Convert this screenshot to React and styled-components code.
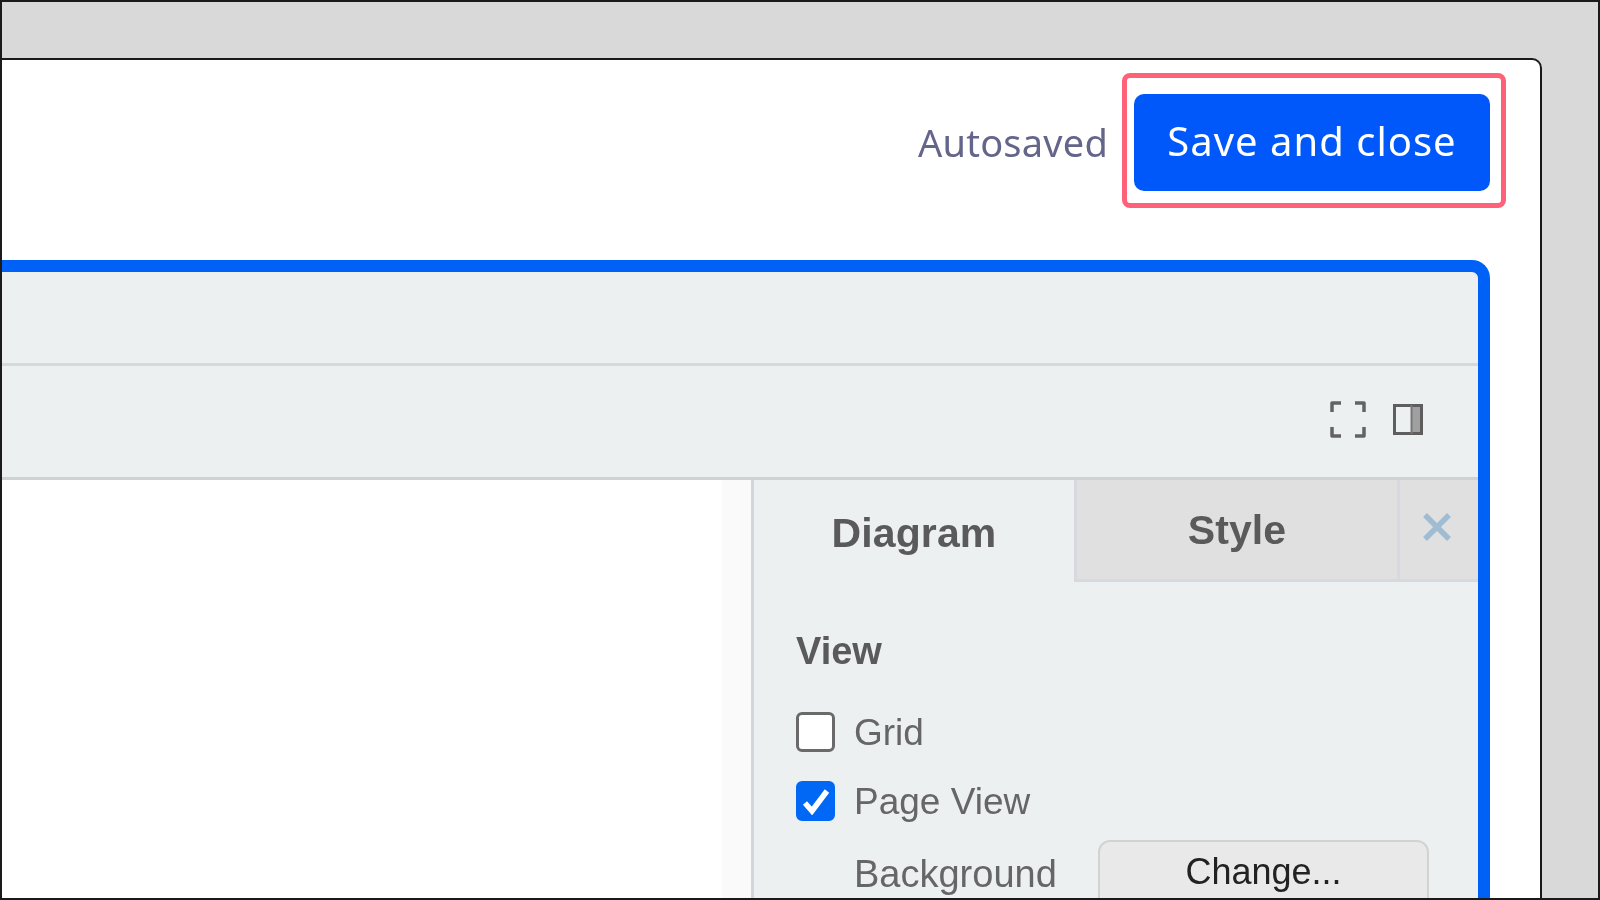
import React from 'react';
import styled, { createGlobalStyle } from 'styled-components';

const GlobalStyle = createGlobalStyle`
  html, body {
    margin: 0;
    height: 100%;
    background: #d9d9d9;
  }
  * {
    box-sizing: border-box;
  }
`;

const Page = styled.div`
  width: 1600px;
  height: 900px;
  overflow: hidden;
  display: flex;
  flex-direction: column;
  background: #d9d9d9;
  border: 2px solid #1a1a1a;
  padding: 56px 56px 0 0;
`;

const ModalWindow = styled.div`
  flex: 1;
  min-height: 0;
  display: flex;
  flex-direction: column;
  background: #fff;
  border-top: 2px solid #1a1a1a;
  border-right: 2px solid #1a1a1a;
  border-top-right-radius: 10px;
  padding-top: 13px;
`;

const Soft = styled.div`
  flex: 1;
  min-height: 0;
  display: flex;
  flex-direction: column;
  filter: blur(0.7px);
`;

const Header = styled.header`
  display: flex;
  justify-content: flex-end;
  align-items: center;
  gap: 14px;
  padding-right: 34px;
  height: 135px;
`;

const Autosaved = styled.span`
  font-family: "Noto Sans", sans-serif;
  font-size: 38px;
  letter-spacing: 0.2px;
  color: #64658a;
  margin-top: 3px;
`;

const Highlight = styled.div`
  width: 384px;
  height: 135px;
  border: 5px solid #ff6178;
  border-radius: 8px;
  padding: 16px 11px 0 7px;
`;

const SaveButton = styled.button`
  width: 100%;
  height: 97px;
  border: 0;
  border-radius: 10px;
  background: #0058fa;
  color: #fff;
  font-family: "Noto Sans", sans-serif;
  font-size: 40px;
  letter-spacing: 1px;
  padding: 0 0 5px;
`;

const Editor = styled.div`
  flex: 1;
  min-height: 0;
  display: flex;
  flex-direction: column;
  margin: 52px 50px 0 0;
  background: #edf0f1;
  border-top: 12px solid #0061f7;
  border-right: 12px solid #0061f7;
  border-top-right-radius: 18px;
`;

const MenuBar = styled.div`
  height: 94px;
  flex-shrink: 0;
  border-bottom: 3px solid #d6d8da;
`;

const ToolBar = styled.div`
  height: 114px;
  flex-shrink: 0;
  display: flex;
  justify-content: flex-end;
  align-items: center;
  gap: 27px;
  padding: 0 55px 4px 0;
  border-bottom: 3px solid #cfd1d3;
`;

const Workspace = styled.div`
  flex: 1;
  min-height: 0;
  display: flex;
`;

const Canvas = styled.div`
  flex: 1;
  background: #fff;
  border-right: 29px solid #fafafa;
`;

const Panel = styled.aside`
  width: 727px;
  flex-shrink: 0;
  display: flex;
  flex-direction: column;
  border-left: 3px solid #d2d6da;
`;

const Tabs = styled.div`
  height: 102px;
  flex-shrink: 0;
  display: flex;
`;

const Tab = styled.div`
  width: ${p => p.$width}px;
  display: flex;
  justify-content: center;
  align-items: center;
  padding-top: ${p => (p.$active ? 4 : 2)}px;
  font-family: "Liberation Sans", Arial, sans-serif;
  font-size: 41px;
  letter-spacing: 0.1px;
  font-weight: 700;
  color: #5a5a5a;
  background: ${p => (p.$active ? 'transparent' : '#e0e0e0')};
  border-left: ${p => (p.$active ? '0' : '3px solid #d6dae0')};
  border-bottom: ${p => (p.$active ? '0' : '3px solid #d6dae0')};
`;

const CloseCell = styled(Tab)`
  flex: 1;
  width: auto;
  padding: 0 5px 6px 0;
`;

const PanelBody = styled.div`
  padding: 46px 0 0 42px;
`;

const SectionTitle = styled.div`
  font-family: "Liberation Sans", Arial, sans-serif;
  font-size: 38px;
  line-height: 46px;
  font-weight: 700;
  color: #5a5a5a;
  margin-bottom: 38px;
`;

const OptionRow = styled.div`
  display: flex;
  align-items: center;
  gap: 19px;
  height: 40px;
  margin-bottom: ${p => p.$gap}px;
`;

const Check = styled.span`
  width: 39px;
  height: 40px;
  border-radius: 6px;
  display: flex;
  align-items: center;
  justify-content: center;
  background: ${p => (p.$checked ? '#0068f5' : '#fff')};
  border: 3px solid ${p => (p.$checked ? '#0068f5' : '#6a6a6a')};
`;

const OptionLabel = styled.span`
  font-family: "Liberation Sans", Arial, sans-serif;
  font-size: 37px;
  color: #666;
  padding-top: 2px;
`;

const BackgroundRow = styled.div`
  display: flex;
  align-items: flex-start;
  padding-left: 58px;
`;

const BackgroundLabel = styled(OptionLabel)`
  width: 244px;
  flex-shrink: 0;
  padding-top: 13px;
  font-size: 38px;
  line-height: 42px;
`;

const ChangeButton = styled.button`
  width: 331px;
  height: 70px;
  flex-shrink: 0;
  background: #e9e9e9;
  border: 2px solid #d2d2d2;
  border-radius: 12px;
  font-family: "Liberation Sans", Arial, sans-serif;
  font-size: 36px;
  color: #222;
  padding: 0 0 6px;
`;

const FullscreenIcon = () => (
  <svg width="36" height="37" viewBox="0 0 36 37" fill="none" stroke="#636363" strokeWidth="3.5" strokeLinejoin="round">
    <path d="M2 11V2H11M25 2H34V11M34 26V35H25M11 35H2V26" />
  </svg>
);

const SidebarIcon = () => (
  <svg width="30" height="31" viewBox="0 0 30 31">
    <rect x="19" y="1" width="10" height="29" fill="#a0a0a0" />
    <rect x="1.5" y="1.5" width="27" height="28" fill="none" stroke="#5e5e5e" strokeWidth="3" />
    <path d="M18.5 1V30" stroke="#777" strokeWidth="2" />
  </svg>
);

const CloseIcon = () => (
  <svg width="28" height="28" viewBox="0 0 28 28" stroke="#a0bcd2" strokeWidth="5.5" fill="none">
    <path d="M2 2L26 26M26 2L2 26" />
  </svg>
);

const CheckMark = () => (
  <svg width="28" height="27" viewBox="0 0 28 27" fill="none" stroke="#fff" strokeWidth="5.5">
    <path d="M3 15L10 23L25 3" />
  </svg>
);

export default function App() {
  return (
    <>
      <GlobalStyle />
      <Page>
        <ModalWindow>
          <Soft>
            <Header>
              <Autosaved>Autosaved</Autosaved>
              <Highlight>
                <SaveButton>Save and close</SaveButton>
              </Highlight>
            </Header>
            <Editor>
              <MenuBar />
              <ToolBar>
                <FullscreenIcon />
                <SidebarIcon />
              </ToolBar>
              <Workspace>
                <Canvas />
                <Panel>
                  <Tabs>
                    <Tab $active $width={320}>Diagram</Tab>
                    <Tab $width={323}>Style</Tab>
                    <CloseCell><CloseIcon /></CloseCell>
                  </Tabs>
                  <PanelBody>
                    <SectionTitle>View</SectionTitle>
                    <OptionRow $gap={29}>
                      <Check />
                      <OptionLabel>Grid</OptionLabel>
                    </OptionRow>
                    <OptionRow $gap={19}>
                      <Check $checked><CheckMark /></Check>
                      <OptionLabel>Page View</OptionLabel>
                    </OptionRow>
                    <BackgroundRow>
                      <BackgroundLabel>Background</BackgroundLabel>
                      <ChangeButton>Change...</ChangeButton>
                    </BackgroundRow>
                  </PanelBody>
                </Panel>
              </Workspace>
            </Editor>
          </Soft>
        </ModalWindow>
      </Page>
    </>
  );
}
